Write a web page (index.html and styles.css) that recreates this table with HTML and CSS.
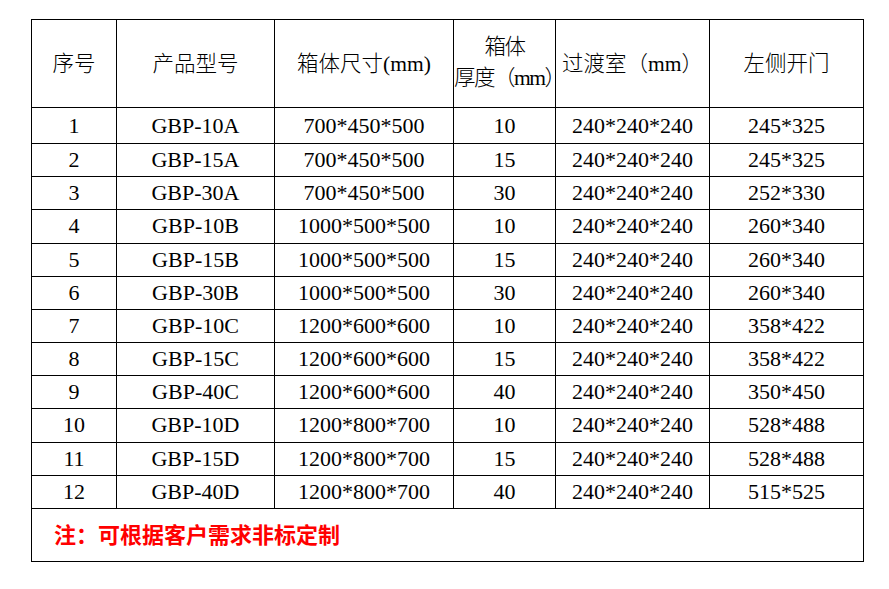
FILE: index.html
```html
<!DOCTYPE html>
<html lang="zh-CN">
<head>
<meta charset="utf-8">
<title>规格表</title>
<link rel="stylesheet" href="styles.css">
</head>
<body>
<table class="spec">
  <colgroup>
    <col class="c1"><col class="c2"><col class="c3"><col class="c4"><col class="c5"><col class="c6">
  </colgroup>
  <thead>
    <tr class="head">
      <th>序号</th>
      <th>产品型号</th>
      <th>箱体尺寸(mm)</th>
      <th class="two">箱体<br>厚度（mm）</th>
      <th>过渡室（mm）</th>
      <th>左侧开门</th>
    </tr>
  </thead>
  <tbody>
    <tr class="first"><td>1</td><td>GBP-10A</td><td>700*450*500</td><td>10</td><td>240*240*240</td><td>245*325</td></tr>
    <tr><td>2</td><td>GBP-15A</td><td>700*450*500</td><td>15</td><td>240*240*240</td><td>245*325</td></tr>
    <tr><td>3</td><td>GBP-30A</td><td>700*450*500</td><td>30</td><td>240*240*240</td><td>252*330</td></tr>
    <tr><td>4</td><td>GBP-10B</td><td>1000*500*500</td><td>10</td><td>240*240*240</td><td>260*340</td></tr>
    <tr><td>5</td><td>GBP-15B</td><td>1000*500*500</td><td>15</td><td>240*240*240</td><td>260*340</td></tr>
    <tr><td>6</td><td>GBP-30B</td><td>1000*500*500</td><td>30</td><td>240*240*240</td><td>260*340</td></tr>
    <tr><td>7</td><td>GBP-10C</td><td>1200*600*600</td><td>10</td><td>240*240*240</td><td>358*422</td></tr>
    <tr><td>8</td><td>GBP-15C</td><td>1200*600*600</td><td>15</td><td>240*240*240</td><td>358*422</td></tr>
    <tr><td>9</td><td>GBP-40C</td><td>1200*600*600</td><td>40</td><td>240*240*240</td><td>350*450</td></tr>
    <tr><td>10</td><td>GBP-10D</td><td>1200*800*700</td><td>10</td><td>240*240*240</td><td>528*488</td></tr>
    <tr><td>11</td><td>GBP-15D</td><td>1200*800*700</td><td>15</td><td>240*240*240</td><td>528*488</td></tr>
    <tr><td>12</td><td>GBP-40D</td><td>1200*800*700</td><td>40</td><td>240*240*240</td><td>515*525</td></tr>
    <tr class="note"><td colspan="6">注：可根据客户需求非标定制</td></tr>
  </tbody>
</table>
</body>
</html>
```

FILE: styles.css
```css
html, body {
  margin: 0;
  background: #fff;
}
body {
  padding: 19px 0 0 31px;
  font-family: "Liberation Serif", "Noto Sans CJK SC", serif;
  color: #000;
}
.spec {
  border-collapse: collapse;
  table-layout: fixed;
  width: 832px;
  font-size: 22px;
}
.c1 { width: 85px; }
.c2 { width: 158px; }
.c3 { width: 179px; }
.c4 { width: 102px; }
.c5 { width: 154px; }
.c6 { width: 154px; }
.spec th, .spec td {
  border: 1px solid #000;
  text-align: center;
  vertical-align: middle;
  padding: 0;
  font-weight: normal;
  white-space: nowrap;
}
.spec th {
  font-family: "Liberation Serif", "Noto Sans CJK SC", serif;
  font-weight: 300;
  font-size: 21.5px;
  padding-bottom: 5px;
}
.head { height: 88px; }
.spec tbody tr { height: 33.18px; }
.spec tbody tr.first { height: 36px; }
.spec tbody td { line-height: 24px; }
.spec th.two {
  line-height: 31px;
  letter-spacing: -1.5px;
  padding-bottom: 1px;
}
.spec tr.note { height: 53px; }
.spec tr.note td {
  text-align: left;
  padding-left: 22px;
  padding-bottom: 4px;
  color: #ff0000;
  font-family: "Noto Sans CJK SC", sans-serif;
  font-weight: 700;
  font-size: 22px;
}
```
